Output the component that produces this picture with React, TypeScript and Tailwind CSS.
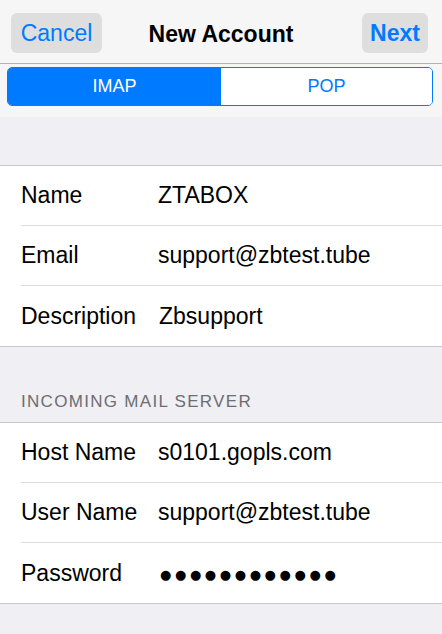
import React from 'react';

type Field = { label: string; value: string; secret?: boolean };

const accountFields: Field[] = [
  { label: 'Name', value: 'ZTABOX' },
  { label: 'Email', value: 'support@zbtest.tube' },
  { label: 'Description', value: 'Zbsupport' },
];

const incomingFields: Field[] = [
  { label: 'Host Name', value: 's0101.gopls.com' },
  { label: 'User Name', value: 'support@zbtest.tube' },
  { label: 'Password', value: '●●●●●●●●●●●●', secret: true },
];

function FieldGroup({ fields }: { fields: Field[] }) {
  return (
    <div className="bg-white border-y border-[#c8c7cc]">
      {fields.map((f, i) => (
        <div key={f.label} className="pl-[21px]">
          <div
            className={`h-[60px] flex items-center ${i < fields.length - 1 ? 'border-b border-[#dcdce0]' : ''}`}
          >
            <div className="w-[137px] shrink-0 text-[23px] text-black">{f.label}</div>
            {f.secret ? (
              <div className="pl-[2px] pt-[3px] text-[13px] tracking-[3.6px] text-black font-['DejaVu_Sans']">{f.value}</div>
            ) : (
              <div className={`text-[23px] text-black ${f.label === 'Description' ? 'pl-[1px]' : ''}`}>{f.value}</div>
            )}
          </div>
        </div>
      ))}
    </div>
  );
}

export default function App() {
  return (
    <div className="w-[442px] h-[634px] overflow-hidden bg-[#efeff4] font-['Liberation_Sans',Arial,sans-serif]">
      {/* Nav bar */}
      <div className="h-[64px] bg-[#f6f6f6] border-b border-[#b2b2b2] flex items-center justify-between pl-[11px] pr-[14px] relative">
        <button className="h-[40px] w-[91px] rounded-[6px] bg-[#dedede] text-[23px] text-[#007aff] flex items-center justify-center mt-[2px] pt-[2px]">
          Cancel
        </button>
        <div className="absolute left-0 right-0 top-0 h-[68px] flex items-center justify-center pointer-events-none">
          <span className="text-[23px] font-bold text-black">New Account</span>
        </div>
        <button className="h-[40px] w-[66px] rounded-[6px] bg-[#dedede] text-[23px] font-bold text-[#007aff] flex items-center justify-center mt-[2px] pt-[2px]">
          Next
        </button>
      </div>

      {/* Segmented control */}
      <div className="bg-[#f6f6f6] pt-[3px] pb-[11px] px-[7px] pr-[9px]">
        <div className="h-[39px] flex border border-[#007aff] rounded-[5px] overflow-hidden">
          <div className="w-[213px] bg-[#007aff] text-white text-[18px] flex items-center justify-center">IMAP</div>
          <div className="flex-1 bg-white text-[#007aff] text-[18px] flex items-center justify-center">POP</div>
        </div>
      </div>

      <div className="h-[48px]" />
      <FieldGroup fields={accountFields} />

      <div className="h-[75px] flex items-end pl-[21px] pb-[12px]">
        <span className="text-[17px] tracking-[1.3px] text-[#6d6d72] leading-none">INCOMING MAIL SERVER</span>
      </div>
      <FieldGroup fields={incomingFields} />
    </div>
  );
}
